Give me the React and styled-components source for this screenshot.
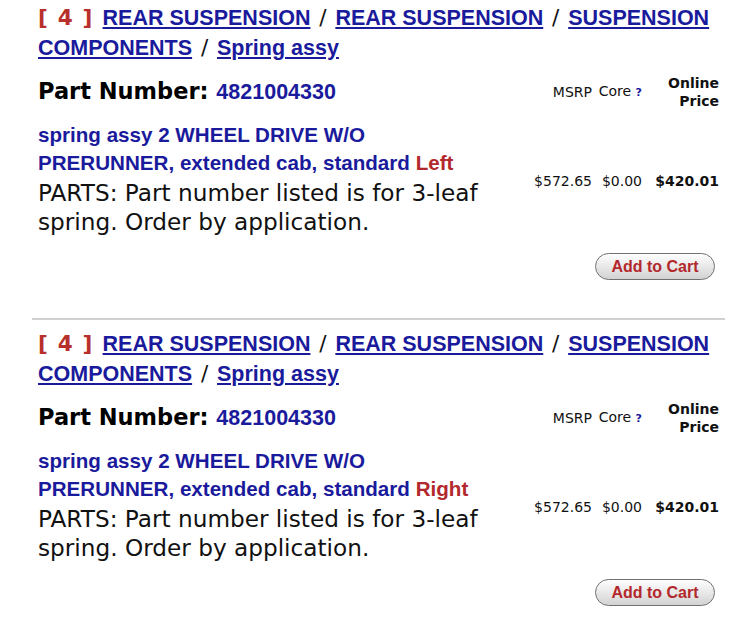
import React from 'react';
import styled, { createGlobalStyle } from 'styled-components';

const items = [
  { id: 1, side: 'Left' },
  { id: 2, side: 'Right' },
];

function PartItem({ side }) {
  return (
    <Item>
      <Crumbs>
        <Index>[ 4 ]</Index> <CrumbLink href="#">REAR SUSPENSION</CrumbLink>
        <Slash> / </Slash>
        <CrumbLink href="#">REAR SUSPENSION</CrumbLink>
        <Slash> / </Slash>
        <CrumbLink href="#">SUSPENSION COMPONENTS</CrumbLink>
        <Slash> / </Slash>
        <CrumbLink href="#">Spring assy</CrumbLink>
      </Crumbs>
      <PartGrid>
        <PartNo>
          Part Number: <Num>4821004330</Num>
        </PartNo>
        <HeadCell>MSRP</HeadCell>
        <HeadCell>
          Core <Help>?</Help>
        </HeadCell>
        <HeadCell $bold>
          Online
          <br />
          Price
        </HeadCell>
        <div>
          <Desc>
            spring assy 2 WHEEL DRIVE W/O PRERUNNER, extended cab, standard{' '}
            <Side>{side}</Side>
          </Desc>
          <Note>PARTS: Part number listed is for 3-leaf spring. Order by application.</Note>
        </div>
        <Price>$572.65</Price>
        <Price>$0.00</Price>
        <Price $bold>$420.01</Price>
      </PartGrid>
      <CartRow>
        <CartButton>Add to Cart</CartButton>
      </CartRow>
    </Item>
  );
}

export default function App() {
  return (
    <>
      <GlobalStyle />
      <Page>
        {items.map((it) => (
          <PartItem key={it.id} side={it.side} />
        ))}
      </Page>
    </>
  );
}

const GlobalStyle = createGlobalStyle`
body {
  margin: 0;
  background: #fff;
  font-family: "DejaVu Sans", Verdana, sans-serif;
}
`

const Page = styled.div`
width: 693px;
padding: 3px 0 0 32px;
`

const Item = styled.section`
padding: 0 6px 38px;
& + & {
  border-top: 2px solid #d0d0d0;
  padding-top: 9px;
}
`

const Crumbs = styled.div`
font-family: "Liberation Sans", Arial, sans-serif;
font-weight: bold;
font-size: 21.5px;
line-height: 30px;
`

const Index = styled.span`
font-family: "DejaVu Sans", Verdana, sans-serif;
color: #b8302c;
letter-spacing: 1.2px;
margin-right: 3px;
`

const CrumbLink = styled.a`
color: #1a1a9c;
text-decoration: underline;
text-underline-offset: 2px;
`

const Slash = styled.span`
font-family: "DejaVu Sans", Verdana, sans-serif;
font-weight: normal;
color: #111;
padding: 0 2px;
`

const PartGrid = styled.div`
display: grid;
grid-template-columns: 1fr 72px 50px 77px;
row-gap: 11px;
margin-top: 11px;
`

const PartNo = styled.div`
align-self: center;
font-weight: bold;
font-size: 22.5px;
line-height: 30px;
color: #000;
margin-top: -2px;
`

const Num = styled.span`
font-family: "Liberation Sans", Arial, sans-serif;
font-size: 21.5px;
color: #1a1a9c;
`

const HeadCell = styled.div`
align-self: center;
text-align: right;
font-size: 14px;
line-height: 18px;
font-weight: ${(p) => (p.$bold ? 'bold' : 'normal')};
color: #111;
`

const Help = styled.span`
font-size: 11px;
font-weight: bold;
color: #1a1a9c;
`

const Desc = styled.div`
font-family: "Liberation Sans", Arial, sans-serif;
font-weight: bold;
font-size: 20.6px;
line-height: 28px;
color: #1a1a9c;
padding-right: 30px;
`

const Side = styled.span`
color: #b3282c;
`

const Note = styled.div`
font-size: 23.2px;
line-height: 29px;
color: #111;
padding-right: 28px;
margin-top: 1px;
`

const Price = styled.div`
align-self: center;
text-align: right;
font-size: 14px;
font-weight: ${(p) => (p.$bold ? 'bold' : 'normal')};
color: #111;
padding-top: 4px;
`

const CartRow = styled.div`
display: flex;
justify-content: flex-end;
padding-right: 4px;
margin-top: 17px;
`

const CartButton = styled.button`
width: 120px;
height: 27px;
padding: 0;
border: 1.5px solid #707070;
border-radius: 14px;
background: linear-gradient(#fefefe, #e4e4e4 60%, #d2d2d2);
color: #b3282c;
font-family: "Liberation Sans", Arial, sans-serif;
font-weight: bold;
font-size: 16px;
cursor: pointer;
`
